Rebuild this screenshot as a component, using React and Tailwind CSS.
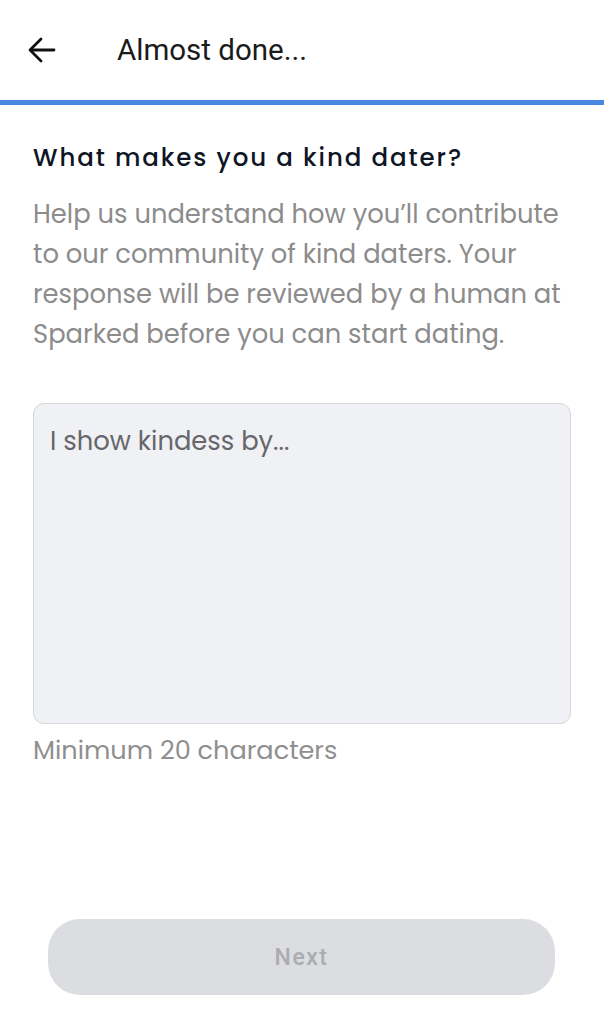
export default function App() {
  return (
    <div className="w-[604px] h-[1024px] bg-white flex flex-col" style={{ fontFamily: "Poppins, 'Open Sans', sans-serif" }}>
      <header className="h-[100px] flex items-center shrink-0">
        <div className="w-[117px] flex items-center pl-[28px]">
          <svg width="28" height="26" viewBox="0 0 28 26" fill="none" stroke="#111" strokeWidth="2.8" strokeLinecap="round" strokeLinejoin="round">
            <path d="M26 13H3" />
            <path d="M13 2L2 13l11 11" />
          </svg>
        </div>
        <h1 className="text-[29.5px] text-[#1b1b1b] leading-none mt-[1px]" style={{ fontFamily: "Roboto, sans-serif" }}>Almost done...</h1>
      </header>
      <div className="h-[5px] bg-[#4a89e2] shrink-0" />
      <main className="flex-1 flex flex-col px-[33px]">
        <h2 className="mt-[37px] text-[24.5px] leading-[32px] text-[#0e1524] tracking-[1.9px] font-medium">What makes you a kind dater?</h2>
        <p className="mt-[20px] text-[25.8px] leading-[40px] text-[#8c8c8c]">
          Help us understand how you’ll contribute to our community of kind daters. Your response will be reviewed by a human at Sparked before you can start dating.
        </p>
        <div className="mt-[49px] h-[321px] rounded-[11px] bg-[#f0f1f5] border border-[#d6d7db] px-[16px] pt-[18px] text-[25.8px] text-[#66666b] leading-[38px]">
          I show kindess by...
        </div>
        <p className="mt-[7px] text-[25.6px] leading-[38px] text-[#8f8f8f]">Minimum 20 characters</p>
        <div className="flex-1" />
        <div className="px-[15px] pb-[29px]">
          <button className="w-[507px] h-[76px] pt-[3px] rounded-[32px] bg-[#dcdde1] text-[23px] font-medium tracking-[1.5px] text-[#abacb0]" style={{ fontFamily: "Roboto, sans-serif" }}>
            Next
          </button>
        </div>
      </main>
    </div>
  );
}
